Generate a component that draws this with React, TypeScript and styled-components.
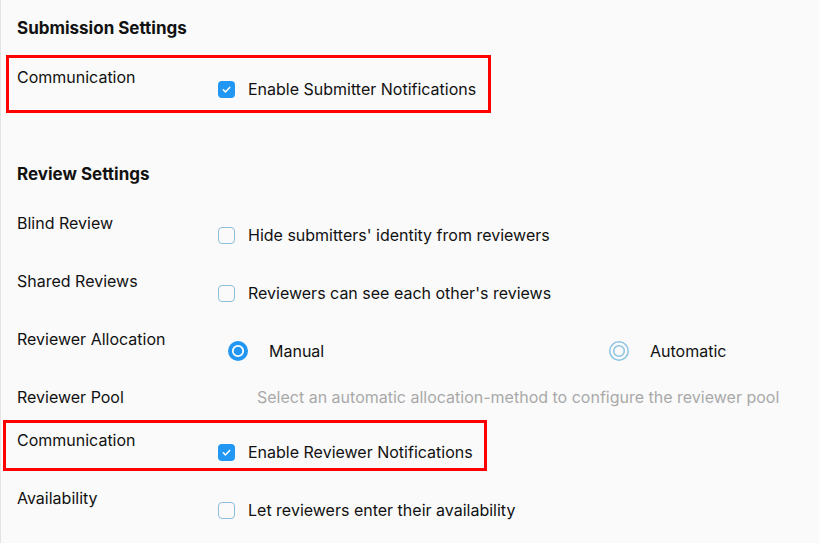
import React from 'react';
import styled, { createGlobalStyle } from 'styled-components';

const GlobalStyles = createGlobalStyle`
  html, body {
    margin: 0;
    padding: 0;
    background: #fafafa;
  }
  body {
    font-family: Inter, 'Noto Sans', sans-serif;
    color: #111;
    overflow: hidden;
  }
`;

const Page = styled.main`
  height: 543px;
  box-sizing: border-box;
  border-left: 1px solid #e3e3e3;
  padding: 18px 0 0 16px;
`;

const Section = styled.section`
  & + & {
    margin-top: 39px;
  }
`;

const Heading = styled.h2`
  margin: 0 0 29px;
  font-size: 17px;
  line-height: 20px;
  font-weight: 700;
`;

const Row = styled.div<{ $height?: number }>`
  position: relative;
  display: grid;
  grid-template-columns: 201px 1fr;
  height: ${(p) => p.$height ?? 58}px;
`;

const Label = styled.div`
  font-size: 16px;
  line-height: 20px;
`;

const Control = styled.label`
  display: flex;
  align-items: center;
  gap: 13px;
  margin-top: 12px;
  height: 20px;
  font-size: 16px;
`;

const Hint = styled.div`
  font-size: 16px;
  line-height: 20px;
  color: #a9a9a9;
  padding-left: 39px;
`;

const RadioGroup = styled.div`
  display: grid;
  grid-template-columns: 381px 1fr;
  margin-top: 12px;
  padding-left: 10px;
`;

const RadioOption = styled.label`
  display: flex;
  align-items: center;
  gap: 21px;
  height: 20px;
  font-size: 16px;
`;

const Box = styled.span<{ $checked?: boolean }>`
  box-sizing: border-box;
  width: 17px;
  height: 17px;
  border-radius: 4px;
  flex: none;
  display: flex;
  align-items: center;
  justify-content: center;
  background: ${(p) => (p.$checked ? '#2196f3' : 'transparent')};
  border: ${(p) => (p.$checked ? 'none' : '1.5px solid #8dbedb')};
`;

const Highlight = styled.div<{ $left: number; $top: number; $width: number; $height: number }>`
  position: absolute;
  left: ${(p) => p.$left}px;
  top: ${(p) => p.$top}px;
  width: ${(p) => p.$width}px;
  height: ${(p) => p.$height}px;
  box-sizing: border-box;
  border: 3px solid #f00;
  pointer-events: none;
`;

function Checkbox({ checked, children }: { checked?: boolean; children: React.ReactNode }) {
  return (
    <Control>
      <Box $checked={checked}>
        {checked && (
          <svg width="11" height="11" viewBox="0 0 12 12">
            <path d="M2.5 6.3l2.3 2.3 4.7-4.9" fill="none" stroke="#fff" strokeWidth="1.6" strokeLinecap="round" strokeLinejoin="round" />
          </svg>
        )}
      </Box>
      {children}
    </Control>
  );
}

function Radio({ checked, children }: { checked?: boolean; children: React.ReactNode }) {
  return (
    <RadioOption>
      <svg width="20" height="20" viewBox="0 0 20 20">
        {checked ? (
          <>
            <circle cx="10" cy="10" r="10" fill="#2196f3" />
            <circle cx="10" cy="10" r="5.2" fill="none" stroke="#fff" strokeWidth="1.8" />
          </>
        ) : (
          <>
            <circle cx="10" cy="10" r="9.2" fill="none" stroke="#8dc3e0" strokeWidth="1.5" />
            <circle cx="10" cy="10" r="5.3" fill="none" stroke="#8dc3e0" strokeWidth="1.5" />
          </>
        )}
      </svg>
      {children}
    </RadioOption>
  );
}

export default function App() {
  return (
    <>
      <GlobalStyles />
      <Page>
        <Section>
          <Heading>Submission Settings</Heading>
          <Row>
            <Highlight $left={-11} $top={-12} $width={485} $height={58} />
            <Label>Communication</Label>
            <Checkbox checked>Enable Submitter Notifications</Checkbox>
          </Row>
        </Section>

        <Section>
          <Heading>Review Settings</Heading>
          <Row>
            <Label>Blind Review</Label>
            <Checkbox>Hide submitters' identity from reviewers</Checkbox>
          </Row>
          <Row>
            <Label>Shared Reviews</Label>
            <Checkbox>Reviewers can see each other's reviews</Checkbox>
          </Row>
          <Row>
            <Label>Reviewer Allocation</Label>
            <RadioGroup>
              <Radio checked>Manual</Radio>
              <Radio>Automatic</Radio>
            </RadioGroup>
          </Row>
          <Row $height={43}>
            <Label>Reviewer Pool</Label>
            <Hint>Select an automatic allocation-method to configure the reviewer pool</Hint>
          </Row>
          <Row>
            <Highlight $left={-14} $top={-10} $width={484} $height={51} />
            <Label>Communication</Label>
            <Checkbox checked>Enable Reviewer Notifications</Checkbox>
          </Row>
          <Row>
            <Label>Availability</Label>
            <Checkbox>Let reviewers enter their availability</Checkbox>
          </Row>
        </Section>
      </Page>
    </>
  );
}
